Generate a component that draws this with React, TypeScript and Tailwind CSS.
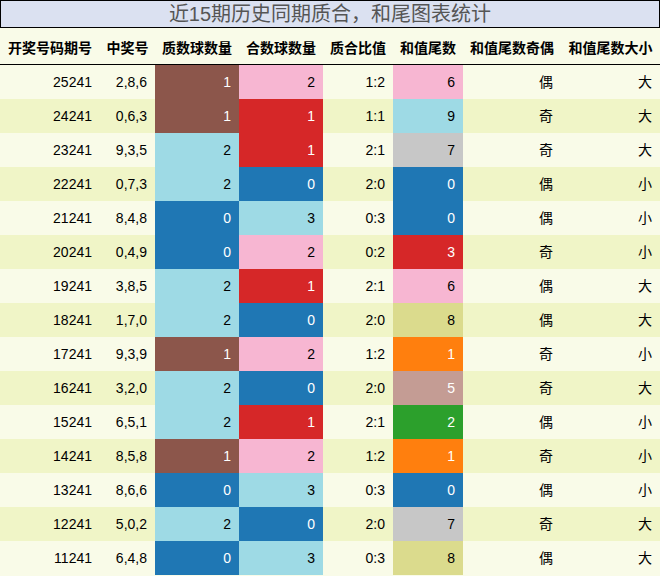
import React from 'react';

type Row = {
  issue: string;
  nums: string;
  prime: number;
  comp: number;
  ratio: string;
  tail: number;
  parity: string;
  size: string;
};

const rows: Row[] = [
  { issue: '25241', nums: '2,8,6', prime: 1, comp: 2, ratio: '1:2', tail: 6, parity: '偶', size: '大' },
  { issue: '24241', nums: '0,6,3', prime: 1, comp: 1, ratio: '1:1', tail: 9, parity: '奇', size: '大' },
  { issue: '23241', nums: '9,3,5', prime: 2, comp: 1, ratio: '2:1', tail: 7, parity: '奇', size: '大' },
  { issue: '22241', nums: '0,7,3', prime: 2, comp: 0, ratio: '2:0', tail: 0, parity: '偶', size: '小' },
  { issue: '21241', nums: '8,4,8', prime: 0, comp: 3, ratio: '0:3', tail: 0, parity: '偶', size: '小' },
  { issue: '20241', nums: '0,4,9', prime: 0, comp: 2, ratio: '0:2', tail: 3, parity: '奇', size: '小' },
  { issue: '19241', nums: '3,8,5', prime: 2, comp: 1, ratio: '2:1', tail: 6, parity: '偶', size: '大' },
  { issue: '18241', nums: '1,7,0', prime: 2, comp: 0, ratio: '2:0', tail: 8, parity: '偶', size: '大' },
  { issue: '17241', nums: '9,3,9', prime: 1, comp: 2, ratio: '1:2', tail: 1, parity: '奇', size: '小' },
  { issue: '16241', nums: '3,2,0', prime: 2, comp: 0, ratio: '2:0', tail: 5, parity: '奇', size: '大' },
  { issue: '15241', nums: '6,5,1', prime: 2, comp: 1, ratio: '2:1', tail: 2, parity: '偶', size: '小' },
  { issue: '14241', nums: '8,5,8', prime: 1, comp: 2, ratio: '1:2', tail: 1, parity: '奇', size: '小' },
  { issue: '13241', nums: '8,6,6', prime: 0, comp: 3, ratio: '0:3', tail: 0, parity: '偶', size: '小' },
  { issue: '12241', nums: '5,0,2', prime: 2, comp: 0, ratio: '2:0', tail: 7, parity: '奇', size: '大' },
  { issue: '11241', nums: '6,4,8', prime: 0, comp: 3, ratio: '0:3', tail: 8, parity: '偶', size: '大' },
];

// 数量列的配色
const countColor: Record<number, string> = {
  0: 'bg-[#1f77b4] text-white',
  1: 'bg-[#8c564b] text-white',
  2: 'bg-[#9edae5] text-black',
  3: 'bg-[#9edae5] text-black',
};

const compColor: Record<number, string> = {
  0: 'bg-[#1f77b4] text-white',
  1: 'bg-[#d62728] text-white',
  2: 'bg-[#f7b6d2] text-black',
  3: 'bg-[#9edae5] text-black',
};

// 尾数列的配色
const tailColor: Record<number, string> = {
  0: 'bg-[#1f77b4] text-white',
  1: 'bg-[#ff7f0e] text-white',
  2: 'bg-[#2ca02c] text-white',
  3: 'bg-[#d62728] text-white',
  5: 'bg-[#c49c94] text-white',
  6: 'bg-[#f7b6d2] text-black',
  7: 'bg-[#c7c7c7] text-black',
  8: 'bg-[#dbdb8d] text-black',
  9: 'bg-[#9edae5] text-black',
};

const headers = ['开奖号码期号', '中奖号', '质数球数量', '合数球数量', '质合比值', '和值尾数', '和值尾数奇偶', '和值尾数大小'];

const gridCols = 'grid grid-cols-[100px_55px_84px_84px_70px_70px_98px_99px]';

function Cell({ children, className = '' }: { children: React.ReactNode; className?: string }) {
  return <div className={`h-[34px] flex items-center justify-end pr-2 ${className}`}>{children}</div>;
}

export default function App() {
  return (
    <div
      className="w-[660px] h-[576px] overflow-hidden bg-[#f9fbe8] text-[14px] text-black"
      style={{ fontFamily: '"Liberation Sans", "Noto Sans CJK SC", sans-serif' }}
    >
      <div className="h-[28px] border border-black bg-[#dbe1f1] flex items-center justify-center text-[20px] text-[#555555] leading-none">
        近15期历史同期质合，和尾图表统计
      </div>
      <div className={`${gridCols} h-[37px] border-b border-black`}>
        {headers.map((h) => (
          <div key={h} className="flex items-center justify-center pt-1 font-bold whitespace-nowrap">
            {h}
          </div>
        ))}
      </div>
      {rows.map((r, i) => (
        <div key={r.issue} className={`${gridCols} ${i % 2 === 0 ? 'bg-[#f9fbe8]' : 'bg-[#f0f5c7]'}`}>
          <Cell>{r.issue}</Cell>
          <Cell>{r.nums}</Cell>
          <Cell className={countColor[r.prime]}>{r.prime}</Cell>
          <Cell className={compColor[r.comp]}>{r.comp}</Cell>
          <Cell>{r.ratio}</Cell>
          <Cell className={tailColor[r.tail]}>{r.tail}</Cell>
          <Cell>{r.parity}</Cell>
          <Cell>{r.size}</Cell>
        </div>
      ))}
    </div>
  );
}
